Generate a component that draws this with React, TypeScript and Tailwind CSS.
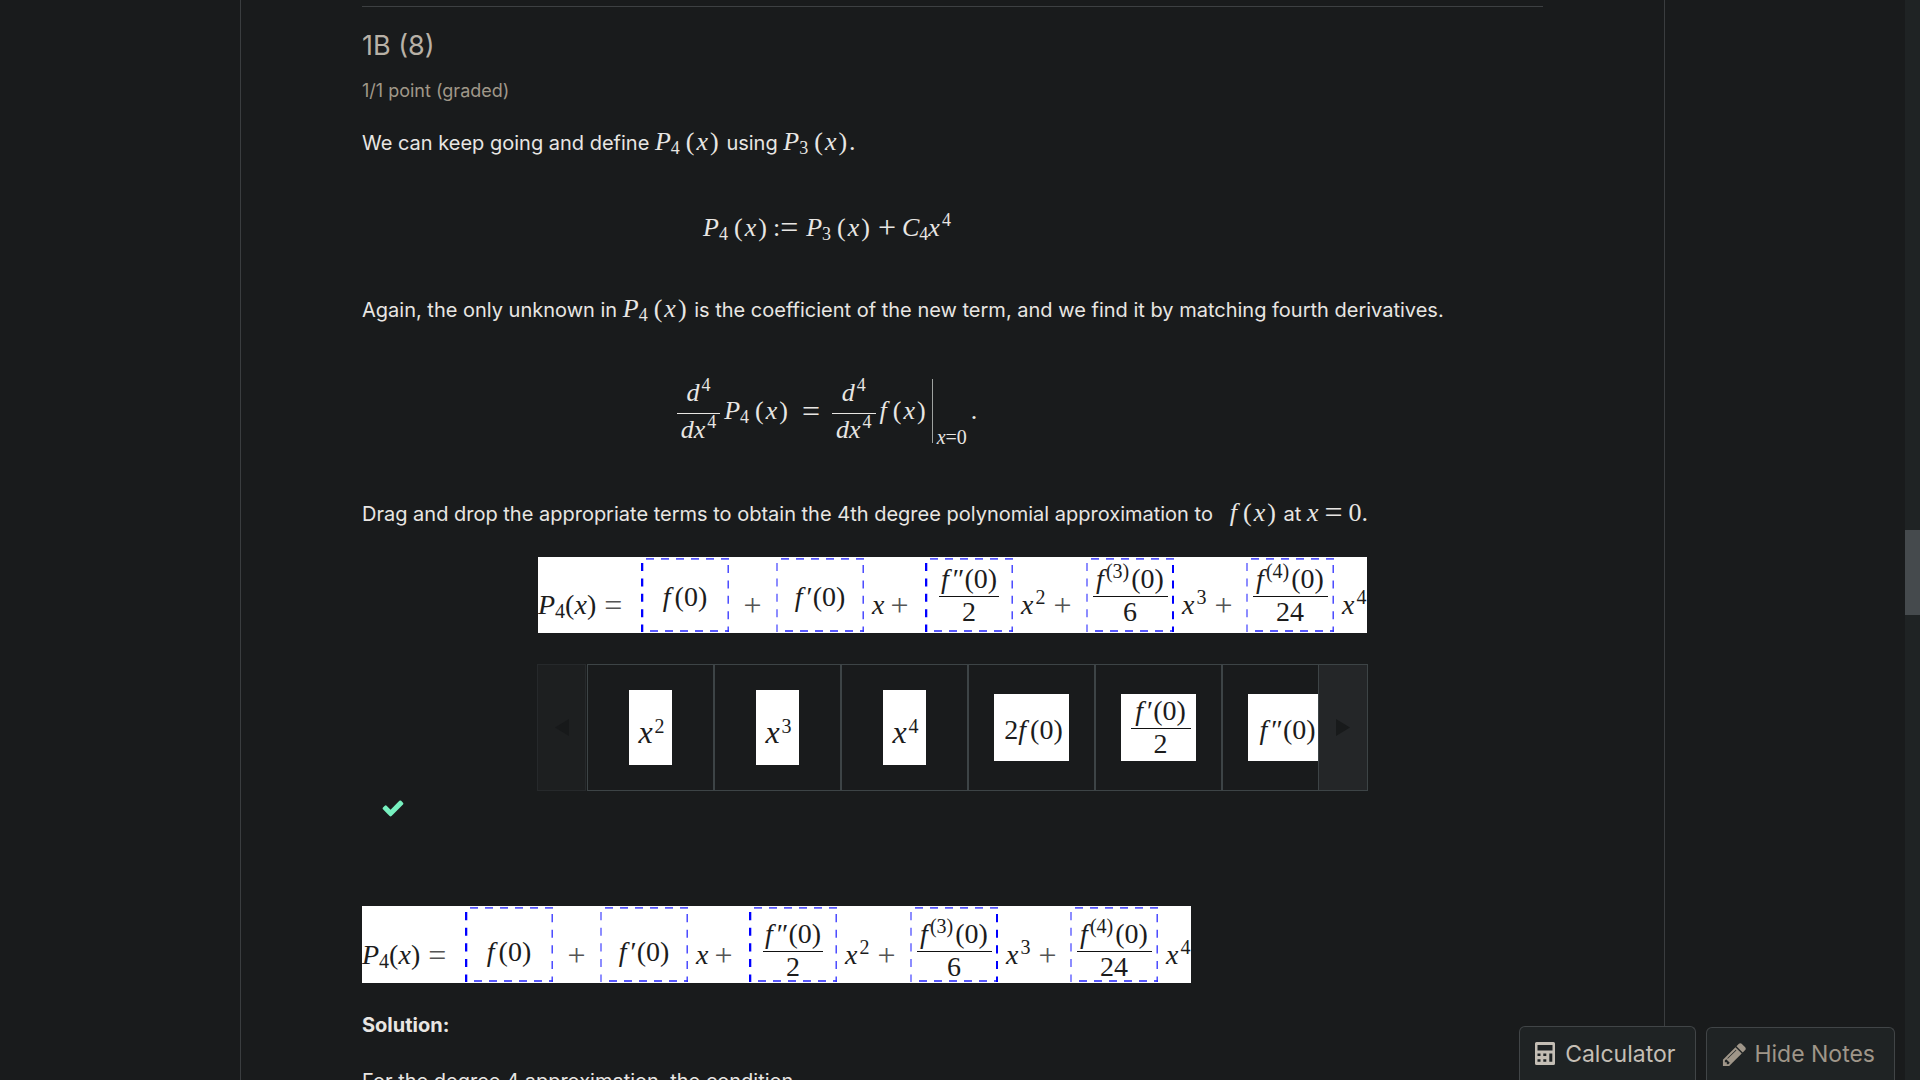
import type { ReactNode } from "react";

/* ---------- math typesetting ---------- */

function M({ children }: { children: ReactNode }) {
  return <span className="whitespace-nowrap font-['Liberation_Serif',serif] text-[26px] leading-none">{children}</span>;
}

function V({ children }: { children: ReactNode }) {
  return <i>{children}</i>;
}

function Sub({ children }: { children: ReactNode }) {
  return <sub className="-bottom-1 text-[18px]">{children}</sub>;
}

function Sup({ children }: { children: ReactNode }) {
  return <sup className="-top-2.5 ml-0.5 text-[18px]">{children}</sup>;
}

function Op({ children }: { children: ReactNode }) {
  return <span className="mx-1.5 align-[-2px] text-[32px] leading-[0]">{children}</span>;
}

function Arg({ children }: { children: ReactNode }) {
  return (
    <>
      <span className="ml-1.5 mr-0.5">(</span>
      {children}
      <span className="mx-0.5">)</span>
    </>
  );
}

function PolyTerm({ degree }: { degree: string }) {
  return (
    <>
      <V>P</V>
      <Sub>{degree}</Sub>
      <Arg>
        <V>x</V>
      </Arg>
    </>
  );
}

function Derivative() {
  return (
    <span className="inline-flex flex-col items-stretch text-center leading-8">
      <span className="pb-1">
        <V>d</V>
        <Sup>4</Sup>
      </span>
      <span className="h-px bg-[#e8e6e3]" />
      <span className="px-1">
        <V>dx</V>
        <Sup>4</Sup>
      </span>
    </span>
  );
}

/* ---------- answer strip ---------- */

function DashedFrame({ left, right }: { left?: boolean; right?: boolean }) {
  return (
    <svg className="absolute inset-0 h-full w-full" viewBox="0 0 88 76" preserveAspectRatio="none" fill="none" aria-hidden="true">
      <path d="M5 1.8H88" stroke="#5a5aff" strokeWidth="1.8" strokeDasharray="8 7" />
      <path d="M9 74H88" stroke="#5a5aff" strokeWidth="1.8" strokeDasharray="8 7" />
      <path d="M1 6V75" stroke={left ? "#0000ff" : "#5050ff"} strokeWidth={left ? 2.6 : 1.3} strokeDasharray="8 7.4" />
      <path d="M87.2 8V75" stroke={right ? "#0000ff" : "#3030ff"} strokeWidth={right ? 2.4 : 1.3} strokeDasharray="8 7.4" />
    </svg>
  );
}

function SmallFrac({ top, bottom, wide }: { top: ReactNode; bottom: ReactNode; wide?: boolean }) {
  return (
    <span className="flex flex-col items-center">
      <span className={`flex h-8 items-start justify-center border-b border-[#111] leading-none ${wide ? "w-[75px]" : "w-[60px]"}`}>{top}</span>
      <span className="h-[30px] leading-[30px]">{bottom}</span>
    </span>
  );
}

function Raised({ children }: { children: ReactNode }) {
  return <sup className="-top-2.5 mx-0.5 text-[20px]">{children}</sup>;
}

function F({ marks }: { marks?: string }) {
  return (
    <span>
      <V>f</V>
      <span className="ml-1">{marks}(0)</span>
    </span>
  );
}

function Mark({ children }: { children: ReactNode }) {
  return <span className="text-[32px] leading-[0] text-[#555]">{children}</span>;
}

function Strip({ low }: { low?: boolean }) {
  const plain = low ? "relative flex items-start justify-center pt-8" : "relative flex items-start justify-center pt-[26px]";
  const frac = low ? "relative flex items-start justify-center pt-[14px]" : "relative flex items-start justify-center pt-2";
  const seg = "flex items-center gap-1.5 pt-5 pl-2";
  return (
    <div className={`grid w-[829px] grid-cols-[103px_88px_47px_88px_61px_88px_73px_88px_72px_88px_33px] items-stretch overflow-hidden bg-white font-['Liberation_Serif',serif] text-[28px] leading-none whitespace-nowrap text-[#1c1c1c] ${low ? "h-[77px]" : "h-[76px]"}`}>
      <div className="flex items-center gap-2 pt-5">
        <span>
          <V>P</V>
          <sub className="-bottom-1 text-[20px]">4</sub>(<V>x</V>)
        </span>
        <Mark>=</Mark>
      </div>
      <div className={plain}>
        <DashedFrame left />
        <F />
      </div>
      <div className="flex items-center justify-center pt-5">
        <Mark>+</Mark>
      </div>
      <div className={plain}>
        <DashedFrame />
        <F marks="′" />
      </div>
      <div className={seg}>
        <V>x</V>
        <Mark>+</Mark>
      </div>
      <div className={frac}>
        <DashedFrame left />
        <SmallFrac top={<F marks="″" />} bottom="2" />
      </div>
      <div className={seg}>
        <span><V>x</V><Raised>2</Raised></span>
        <Mark>+</Mark>
      </div>
      <div className={frac}>
        <DashedFrame right />
        <SmallFrac wide top={<span><V>f</V><Raised>(3)</Raised>(0)</span>} bottom="6" />
      </div>
      <div className={seg}>
        <span><V>x</V><Raised>3</Raised></span>
        <Mark>+</Mark>
      </div>
      <div className={frac}>
        <DashedFrame />
        <SmallFrac wide top={<span><V>f</V><Raised>(4)</Raised>(0)</span>} bottom="24" />
      </div>
      <div className={seg}>
        <span><V>x</V><Raised>4</Raised></span>
      </div>
    </div>
  );
}

/* ---------- term carousel ---------- */

function Tile({ tall, children }: { tall?: boolean; children: ReactNode }) {
  return (
    <li className="flex h-[127px] w-[127px] shrink-0 items-center justify-center border border-[#3d4446]">
      <button
        className={`flex items-center justify-center bg-white font-['Liberation_Serif',serif] leading-none whitespace-nowrap text-[#1c1c1c] ${tall ? "h-[75px] w-[43px] pt-2 pl-1 text-[32px]" : "h-[67px] w-[75px] pl-1 text-[28px]"}`}
      >
        {children}
      </button>
    </li>
  );
}

function Carousel() {
  return (
    <div className="flex w-[831px]">
      <button aria-label="Previous terms" disabled className="flex w-[49px] shrink-0 items-center justify-center border border-[#26292b] bg-[#1d1f20]">
        <svg viewBox="0 0 14 17" className="h-[17px] w-3.5" fill="#17191a"><path d="M14 0v17L0 8.5z" /></svg>
      </button>
      <ul className="ml-px flex min-w-0 flex-1 overflow-hidden">
        <Tile tall><span><V>x</V><Raised>2</Raised></span></Tile>
        <Tile tall><span><V>x</V><Raised>3</Raised></span></Tile>
        <Tile tall><span><V>x</V><Raised>4</Raised></span></Tile>
        <Tile><span className="pt-1">2<F /></span></Tile>
        <Tile><SmallFrac top={<F marks="′" />} bottom="2" /></Tile>
        <Tile><span className="pt-1"><F marks="″" /></span></Tile>
      </ul>
      <button aria-label="Next terms" className="flex w-[50px] shrink-0 items-center justify-center border border-[#3d4446] bg-[#242628]">
        <svg viewBox="0 0 14 17" className="h-[17px] w-3.5" fill="#181a1b"><path d="M0 0v17l14-8.5z" /></svg>
      </button>
    </div>
  );
}

/* ---------- page ---------- */

function CalculatorIcon() {
  return (
    <svg viewBox="0 0 20 23" className="h-[23px] w-5" aria-hidden="true">
      <path
        fill="currentColor"
        fillRule="evenodd"
        d="M1.500 0h17a1.500 1.500 0 0 1 1.500 1.500v20a1.500 1.500 0 0 1-1.500 1.500h-17a1.500 1.500 0 0 1-1.500-1.500v-20a1.500 1.500 0 0 1 1.500-1.500zM2.500 3v5.500h15V3zM2.500 11.500v2.500h3v-2.500zM8.300 11.500v2.500h3v-2.500zM2.500 17.200v2.500h3v-2.500zM8.300 17.200v2.500h3v-2.500zM14.300 11.500v8.200h3v-8.200z"
      />
    </svg>
  );
}

function PencilIcon() {
  return (
    <svg viewBox="0 0 1792 1792" className="h-[27px] w-[27px]" fill="currentColor" aria-hidden="true">
      <path d="M491 1536l91-91-235-235-91 91v107h128v128h107zm523-928q0-22-22-22-10 0-17 7l-542 542q-7 7-7 17 0 22 22 22 10 0 17-7l542-542q7-7 7-17zm-54-192l416 416-832 832h-416v-416zm683 96q0 53-37 90l-166 166-416-416 166-165q36-38 90-38 53 0 91 38l235 234q37 39 37 91z" />
    </svg>
  );
}

export default function App() {
  return (
    <div className="relative flex h-screen overflow-hidden bg-[#191b1c] font-[Inter,sans-serif] text-[20px] leading-8 text-[#e8e6e3]">
      <div className="flex min-w-0 flex-1 justify-center">
        <main className="w-[1425px] border-x border-[#3a3d3f] px-[121px] pt-1.5">
          <section className="border-t border-[#3d4042]">
            <h3 className="mt-[21px] text-[27px] leading-9 text-[#b8b1a6]">1B (8)</h3>
            <p className="mt-[11px] text-[18px] text-[#a09889]">1/1 point (graded)</p>
            <p className="mt-5 h-8">
              We can keep going and define <M><PolyTerm degree="4" /></M> using <M><PolyTerm degree="3" />.</M>
            </p>
            <div className="mt-[53px] flex h-8 max-w-[930px] items-center justify-center">
              <M>
                <PolyTerm degree="4" />
                <span className="ml-1">:</span>
                <span className="mr-2 align-[-2px] text-[32px] leading-[0]">=</span>
                <PolyTerm degree="3" />
                <Op>+</Op>
                <V>C</V><Sub>4</Sub><V>x</V><Sup>4</Sup>
              </M>
            </div>
            <p className="mt-[50px] h-8">
              Again, the only unknown in <M><PolyTerm degree="4" /></M> is the coefficient of the new term, and we find it by matching fourth derivatives.
            </p>
            <div className="mt-[45px] flex h-20 max-w-[930px] items-center justify-center">
              <span className="flex items-center font-['Liberation_Serif',serif] text-[26px] leading-none whitespace-nowrap">
                <Derivative />
                <span className="ml-1"><PolyTerm degree="4" /></span>
                <span className="mx-3 text-[32px]">=</span>
                <Derivative />
                <span className="ml-1"><V>f</V><Arg><V>x</V></Arg></span>
                <span className="ml-1 flex h-16 items-end border-l border-[#9fa3a0] pl-1 text-[20px]">
                  <span className="-mb-1"><V>x</V>=0</span>
                </span>
                <span className="ml-1">.</span>
              </span>
            </div>
            <p className="mt-[47px] h-8">
              Drag and drop the appropriate terms to obtain the 4th degree polynomial approximation to&nbsp;&nbsp;{" "}
              <M><V>f</V><Arg><V>x</V></Arg></M> at <M><V>x</V><Op>=</Op>0.</M>
            </p>
            <div className="mt-[27px] flex justify-center"><Strip /></div>
            <div className="mt-[31px] flex justify-center"><Carousel /></div>
            <div className="mt-[5px] pl-[19px] text-[#77f0bf]">
              <svg viewBox="0 0 1792 1792" className="h-6 w-6" fill="currentColor" role="img" aria-label="Correct">
                <path d="M1671 566q0 40-28 68l-724 724-136 136q-28 28-68 28t-68-28l-136-136-362-362q-28-28-28-68t28-68l136-136q28-28 68-28t68 28l294 295 656-657q28-28 68-28t68 28l136 136q28 28 28 68z" />
              </svg>
            </div>
            <div className="mt-[86px]"><Strip low /></div>
            <p className="mt-[26px] font-bold">Solution:</p>
            <p className="mt-6">For the degree 4 approximation, the condition</p>
          </section>
        </main>
      </div>
      <div className="w-[15px] shrink-0 bg-[#1f2324] pt-[530px]">
        <div className="h-[85px] bg-[#454a4d]" />
      </div>
      <div className="absolute right-[25px] bottom-0 flex items-end gap-2.5 text-[23px]">
        <button className="flex h-[54px] items-center gap-2.5 rounded-t-md border border-b-0 border-[#414547] bg-[#1f2324] pr-5 pl-[15px] text-[#c4beb5]">
          <CalculatorIcon />
          Calculator
        </button>
        <button className="flex h-[53px] items-center gap-1.5 rounded-t-md border border-b-0 border-[#414547] bg-[#1f2324] pr-[19px] pl-3.5 text-[#9f9689]">
          <PencilIcon />
          Hide Notes
        </button>
      </div>
    </div>
  );
}
